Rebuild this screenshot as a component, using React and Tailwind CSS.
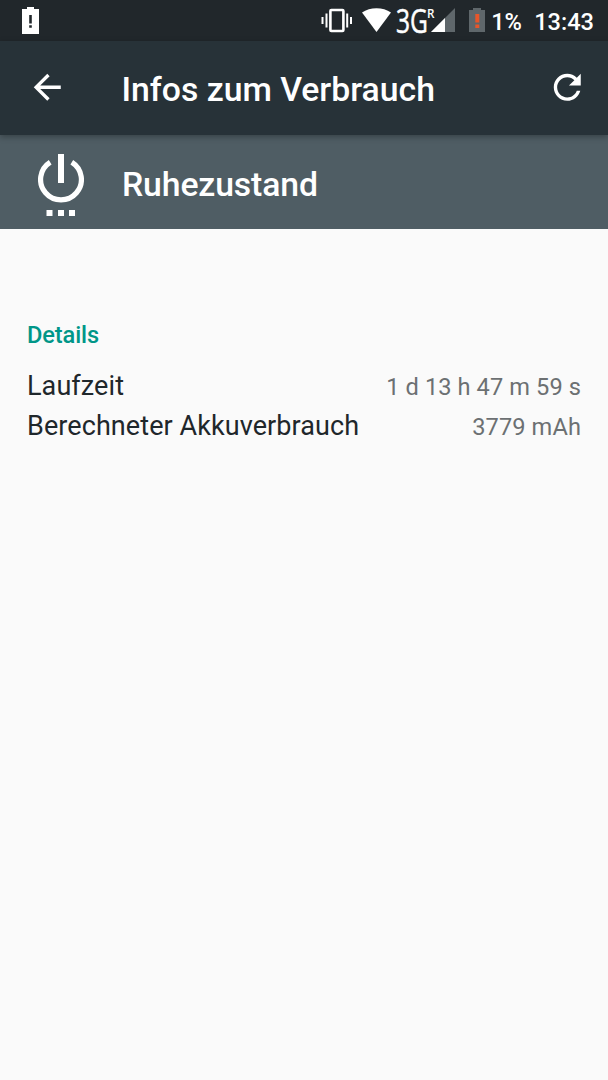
// BatteryUsageDetail.jsx
import React from 'react';

const details = [
  { id: 'runtime', label: 'Laufzeit', value: '1 d 13 h 47 m 59 s' },
  { id: 'power', label: 'Berechneter Akkuverbrauch', value: '3779 mAh' },
];

const StatusBar = () => (
  <div className="flex h-[41px] shrink-0 items-start bg-[#21272b] pl-[22px] pr-[14px] text-white">
    <svg className="h-[40px] w-[17px]" viewBox="0 0 17 40">
      <path fill="#fff" d="M5 7h7v2h5v25H0V9h5z" />
      <path fill="#21272b" d="M7.2 15h2.6v8.5H7.2zM7.2 25.2h2.6v2.6H7.2z" />
    </svg>

    <div className="ml-auto flex items-start">
      {/* vibrate */}
      <svg className="h-[40px] w-[31px]" viewBox="0 0 31 40" fill="none" stroke="#fff">
        <rect x="9.4" y="10" width="13" height="21" rx="1" strokeWidth="2.6" />
        <path strokeWidth="2" d="M5.5 13.5v14M1.5 17v7M26.2 13.5v14M30 17v7" />
      </svg>
      {/* wifi */}
      <svg className="ml-[10px] h-[40px] w-[29px]" viewBox="0 0 29 40">
        <path fill="#fff" d="M0 12.6C8 6.7 21 6.7 29 12.6L14.5 32z" />
      </svg>
      {/* network type and signal */}
      <div className="ml-[5px] flex h-[40px] w-[59px] items-start">
        <span className="w-[31px] origin-left scale-x-[0.77] whitespace-nowrap font-['Open_Sans',sans-serif] text-[32px] leading-[41px] [-webkit-text-stroke:0.5px_white]">3G</span>
        <span className="w-[5px] origin-left scale-x-[0.9] font-['Open_Sans',sans-serif] text-[13px] font-semibold leading-[27px]">R</span>
        <svg className="-ml-[1px] h-[40px] w-[24px] shrink-0" viewBox="0 0 24 40">
          <path fill="#5f676b" d="M24 8v24H0z" />
          <path fill="#fff" d="M14 18v14H0z" />
        </svg>
      </div>
      {/* battery */}
      <svg className="ml-[14px] h-[40px] w-[16px]" viewBox="0 0 16 40">
        <path fill="#5f676b" d="M4 8h8v2h4v22H0V10h4z" />
        <path fill="#e8562a" d="M6.3 14h4v8.5h-4zM6.3 24.5h4V28h-4z" />
      </svg>
      <span className="ml-[6px] w-[43px] text-[23.6px] font-medium leading-[44px]">1%</span>
      <span className="text-[23.6px] font-medium leading-[44px]">13:43</span>
    </div>
  </div>
);

const Toolbar = () => (
  <div className="z-10 flex h-[94px] shrink-0 items-center bg-[#273238] pl-[27px] pr-[21px] text-white shadow-[0_2px_6px_rgba(0,0,0,0.3)]">
    <button className="mb-[1px] mr-[54px]">
      <svg className="h-[40.5px] w-[40.5px]" viewBox="0 0 24 24" fill="currentColor">
        <path d="M20 11H7.83l5.59-5.59L12 4l-8 8 8 8 1.41-1.41L7.83 13H20v-2z" />
      </svg>
    </button>
    <h1 className="pt-[4px] text-[33.75px] font-medium leading-[40px]">Infos zum Verbrauch</h1>
    <button className="mb-[1px] ml-auto">
      <svg className="h-[40.5px] w-[40.5px]" viewBox="0 0 24 24" fill="currentColor">
        <path d="M17.65 6.35C16.2 4.9 14.21 4 12 4c-4.42 0-7.99 3.58-7.99 8s3.57 8 7.99 8c3.73 0 6.84-2.55 7.73-6h-2.08c-.82 2.33-3.04 4-5.65 4-3.31 0-6-2.69-6-6s2.69-6 6-6c1.66 0 3.14.69 4.22 1.78L13 11h7V4l-2.35 2.35z" />
      </svg>
    </button>
  </div>
);

const BatteryUsageDetail = () => {
  return (
    <div className="flex h-[1080px] w-[608px] flex-col overflow-hidden bg-[#fafafa] font-[Roboto,sans-serif]">
      <StatusBar />
      <Toolbar />

      <div className="flex h-[94px] shrink-0 items-center bg-[#4f5d64] pl-[38px] pt-[6px] text-white">
        <svg className="mr-[38px] h-[64px] w-[46px]" viewBox="0 0 46 64" fill="none" stroke="#fff">
          <path strokeWidth="5.2" d="M12.2 9.2A20.4 20.4 0 1 0 33.8 9.2" />
          <path strokeWidth="6" d="M23 1v29" />
          <path strokeWidth="6" d="M8.5 60h6M20 60h6M31 60h6" />
        </svg>
        <h2 className="text-[33.75px] font-medium leading-[40px] tracking-[-0.12px]">Ruhezustand</h2>
      </div>

      <div className="px-[27px] pt-[92px]">
        <h3 className="text-[23.6px] font-medium leading-[28px] tracking-[-0.12px] text-[#009688]">Details</h3>
        <div className="mt-[17px]">
          {details.map((item) => (
            <div key={item.id} className="flex h-[40px] items-baseline justify-between">
              <span className="text-[27px] leading-[40px] tracking-[0.08px] text-[#1f272b]">{item.label}</span>
              <span className="text-[23.6px] leading-[40px] tracking-[0.1px] text-[#6c7072]">{item.value}</span>
            </div>
          ))}
        </div>
      </div>
    </div>
  );
};

export default BatteryUsageDetail;
